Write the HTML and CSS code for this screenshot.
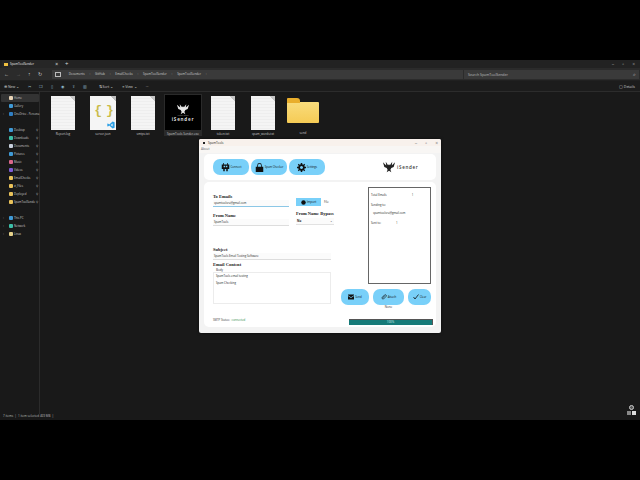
FILE: index.html
```html
<!DOCTYPE html>
<html lang="en">
<head>
    <meta charset="UTF-8">
    <meta name="viewport" content="width=device-width, initial-scale=1.0">
    <title>SpamToolSender</title>
    <link rel="stylesheet" href="styles.css">
</head>
<body>
    <div class="explorer">
        <div class="tabs">
            <div class="tab"><span class="mini-folder"></span>SpamToolSender<span class="tab-x">×</span></div>
            <span class="tab-plus">+</span>
            <div class="win-controls"><span>–</span><span>▫</span><span>×</span></div>
        </div>
        <div class="addressbar">
            <div class="nav-icons"><span>←</span><span class="dim">→</span><span>↑</span><span>↻</span></div>
            <div class="path">
                <span class="pc"></span>
                <span>Documents</span><i>›</i><span>GitHub</span><i>›</i><span>EmailChecks</span><i>›</i><span>SpamToolSender</span><i>›</i><span>SpamToolSender</span><i>›</i>
            </div>
            <div class="search">Search SpamToolSender<span>⌕</span></div>
        </div>
        <div class="commands">
            <span>⊕ New ⌄</span>
            <span class="cmd-icons">✂ ❐ ▯ ◉ ⇪ ▥</span>
            <span>⇅ Sort ⌄</span>
            <span>≡ View ⌄</span>
            <span>···</span>
            <span class="details">▢ Details</span>
        </div>
        <div class="body">
            <aside class="sidebar">
                <div class="side-item active"><b class="dot home"></b>Home</div>
                <div class="side-item"><b class="dot blue"></b>Gallery</div>
                <div class="side-item"><u>›</u><b class="dot cloud"></b>OneDrive - Persona</div>
                <div class="side-gap"></div>
                <div class="side-item"><b class="dot blue"></b>Desktop<em>⚲</em></div>
                <div class="side-item"><b class="dot teal"></b>Downloads<em>⚲</em></div>
                <div class="side-item"><b class="dot grey"></b>Documents<em>⚲</em></div>
                <div class="side-item"><b class="dot blue"></b>Pictures<em>⚲</em></div>
                <div class="side-item"><b class="dot pink"></b>Music<em>⚲</em></div>
                <div class="side-item"><b class="dot purple"></b>Videos<em>⚲</em></div>
                <div class="side-item"><b class="dot yellow"></b>EmailChecks<em>⚲</em></div>
                <div class="side-item"><b class="dot yellow"></b>zi_Files<em>⚲</em></div>
                <div class="side-item"><b class="dot yellow"></b>Deployed<em>⚲</em></div>
                <div class="side-item"><b class="dot yellow"></b>SpamToolSende<em>⚲</em></div>
                <div class="side-gap"></div>
                <div class="side-item"><u>›</u><b class="dot blue"></b>This PC</div>
                <div class="side-item"><u>›</u><b class="dot teal"></b>Network</div>
                <div class="side-item"><u>›</u><b class="dot linux"></b>Linux</div>
            </aside>
            <main class="files">
                <div class="file"><div class="doc"></div><span>Report.log</span></div>
                <div class="file"><div class="doc json"><span class="braces">{ }</span><svg class="vscode" viewBox="0 0 10 10"><path d="M7 0.5 L9.5 1.6 V8.4 L7 9.5 L2.8 5.7 L1.2 7 L0.4 6.5 V3.5 L1.2 3 L2.8 4.3 Z M7 3 L4.6 5 L7 7 Z" fill="#2a9fe6" fill-rule="evenodd"/></svg></div><span>server.json</span></div>
                <div class="file"><div class="doc"></div><span>smtps.txt</span></div>
                <div class="file selected">
                    <div class="exe">
                        <svg class="eagle" viewBox="0 0 30 24"><path d="M2 3 L9 9 L8 2 L13 8 L15 6 L17 8 L22 2 L21 9 L28 3 L25 12 L20 14 L18 18 L20 23 L15 20 L10 23 L12 18 L10 14 L5 12 Z" fill="#e6e6e6"/></svg>
                        <span class="exe-tag">Spam Tools</span>
                        <span class="exe-logo">iSender</span>
                    </div>
                    <span>SpamTools Sender.exe</span>
                </div>
                <div class="file"><div class="doc"></div><span>token.txt</span></div>
                <div class="file"><div class="doc"></div><span>spam_words.txt</span></div>
                <div class="file"><div class="folder"></div><span>send</span></div>
            </main>
        </div>
        <div class="statusbar">7 items &nbsp;|&nbsp; 1 item selected 469 MB &nbsp;|</div>
    </div>

    <div class="webcam">
        <span class="cam-dot"></span>
        <div class="cam-keys"><i></i><i class="on"></i></div>
    </div>

    <div class="app">
        <div class="app-title">
            <span class="app-name"><b></b>SpamTools</span>
            <div class="app-controls"><span>–</span><span>▫</span><span>×</span></div>
        </div>
        <div class="app-menu">About</div>
        <div class="app-body">
            <header class="app-header">
                <div class="top-buttons">
                    <button class="pill top-pill"><svg viewBox="0 0 12 12"><path d="M3 0h1v2h4V0h1v2h2v6H9v3H7V8H5v3H3V8H1V2h2z M3.500 3.500v2h2v-2z M6.500 3.500v2h2v-2z" fill-rule="evenodd"/></svg>Connect</button>
                    <button class="pill top-pill"><svg viewBox="0 0 12 12"><path d="M1 5h10v7H1z M3 5V3a3 3 0 0 1 6 0v2H8V3a2 2 0 0 0-4 0v2z"/></svg>Spam Checker</button>
                    <button class="pill top-pill"><svg viewBox="0 0 12 12"><path d="M5 0h2v1.700l1.500.6L9.700 1.100 10.900 2.300 9.700 3.500l.6 1.500H12v2h-1.700l-.6 1.500 1.200 1.200-1.200 1.200-1.200-1.200-1.500.6V12H5v-1.700l-1.500-.6-1.200 1.200-1.200-1.200 1.200-1.200L1.700 7H0V5h1.700l.6-1.500L1.100 2.300 2.300 1.100 3.500 2.300 5 1.700z M6 4a2 2 0 1 0 .01 0z" fill-rule="evenodd"/></svg>Settings</button>
                </div>
                <div class="brand">
                    <svg viewBox="0 0 30 24"><path d="M2 2 L9 9 L8 1 L13 8 L15 6 L17 8 L22 1 L21 9 L28 2 L25 12 L20 14 L18 18 L20 23 L15 20 L10 23 L12 18 L10 14 L5 12 Z" fill="#222"/></svg>
                    <span>iSender</span>
                </div>
            </header>
            <section class="card">
                <div class="form">
                    <div class="row-top">
                        <div class="col-wide">
                            <label class="label">To Emails</label>
                            <div class="input focus">spamtoolsru@gmail.com</div>
                            <label class="label gap-label">From Name</label>
                            <div class="input">SpamTools</div>
                        </div>
                        <div class="col-side">
                            <div class="import-row">
                                <button class="import"><svg viewBox="0 0 10 10"><circle cx="5" cy="5" r="4.500"/></svg>Import</button>
                                <span class="small">File</span>
                            </div>
                            <label class="label bypass">From Name Bypass</label>
                            <div class="select">No<span>⌄</span></div>
                        </div>
                    </div>
                    <label class="label subject">Subject</label>
                    <div class="input long">SpamTools Email Testing Software</div>
                    <label class="label content">Email Content</label>
                    <div class="small body-label">Body</div>
                    <div class="textbox">
                        <p>SpamTools email testing</p>
                        <p>Spam Checking</p>
                    </div>
                    <div class="smtp">SMTP Status: <span>connected</span></div>
                </div>
                <div class="side">
                    <div class="log">
                        <div class="log-row"><span>Total Emails</span><span class="total">1</span></div>
                        <div class="log-row">Sending to:</div>
                        <div class="log-mail">spamtoolsru@gmail.com</div>
                        <div class="log-row sent"><span>Sent to:</span><span>1</span></div>
                    </div>
                    <div class="actions">
                        <button class="pill act send"><svg viewBox="0 0 12 10"><path d="M0 0h12v10H0z M0 1.500L6 5.500 12 1.500V3L6 7 0 3z" fill-rule="evenodd"/></svg>Send</button>
                        <div class="attach-wrap">
                            <button class="pill act attach"><svg viewBox="0 0 12 12"><path d="M1.500 7.500L7 2a2 2 0 0 1 3 3L5 10a1.200 1.200 0 0 1-2-2l4.500-4.500" fill="none" stroke="#111" stroke-width="1.300"/></svg>Attach</button>
                            <span class="small none">None</span>
                        </div>
                        <button class="pill act clear"><svg viewBox="0 0 12 12"><path d="M1 6l3 4 7-9" fill="none" stroke="#111" stroke-width="1.600"/></svg>Clear</button>
                    </div>
                    <div class="progress">100%</div>
                </div>
            </section>
        </div>
    </div>
</body>
</html>
```

FILE: styles.css
```css
body, html {
    margin: 0;
    padding: 0;
    width: 640px;
    height: 480px;
    overflow: hidden;
    background: #000;
    font-family: "Open Sans", "Liberation Sans", sans-serif;
}
.explorer {
    position: absolute;
    left: 0;
    top: 60px;
    width: 640px;
    height: 360px;
    display: flex;
    flex-direction: column;
    background: #191919;
    color: #ddd;
    font-size: 3px;
}
.tabs {
    height: 8px;
    background: #222222;
    display: flex;
    align-items: center;
    padding-left: 2px;
}
.tab {
    width: 58px;
    height: 8px;
    box-sizing: border-box;
    background: #262626;
    display: flex;
    align-items: center;
    gap: 2px;
    padding-left: 2px;
    color: #eee;
}
.mini-folder {
    width: 4px;
    height: 3px;
    background: #f0c040;
}
.tab-x {
    margin-left: auto;
    margin-right: 2px;
    font-size: 5px;
}
.tab-plus {
    margin-left: 5px;
    font-size: 6px;
}
.win-controls {
    margin-left: auto;
    display: flex;
    gap: 8px;
    padding-right: 5px;
    font-size: 5px;
    color: #999;
}
.addressbar {
    height: 13px;
    background: #2b2b2b;
    display: flex;
    align-items: center;
    border-bottom: 1px solid #202020;
    box-sizing: border-box;
}
.nav-icons {
    display: flex;
    gap: 7px;
    width: 52px;
    box-sizing: border-box;
    padding-left: 4px;
    font-size: 5px;
    color: #ccc;
}
.nav-icons .dim {
    color: #666;
}
.path {
    width: 411px;
    height: 9px;
    background: #3a3a3a;
    display: flex;
    align-items: center;
    gap: 4.700px;
    padding-left: 3px;
    box-sizing: border-box;
    color: #ccc;
}
.path i {
    font-style: normal;
    color: #999;
}
.pc {
    width: 4px;
    height: 3px;
    border: 1px solid #bbb;
    margin-right: 3px;
}
.search {
    width: 175px;
    height: 9px;
    margin-left: 1px;
    background: #3a3a3a;
    display: flex;
    align-items: center;
    justify-content: space-between;
    padding: 0 3px 0 4px;
    box-sizing: border-box;
    color: #bbb;
    font-size: 3.500px;
}
.search span {
    font-size: 5px;
}
.commands {
    height: 10px;
    background: #1c1c1c;
    border-bottom: 1px solid #2c2c2c;
    display: flex;
    align-items: center;
    gap: 9px;
    padding: 0 5px 0 4px;
    color: #ccc;
    font-size: 3.500px;
}
.cmd-icons {
    word-spacing: 7px;
    margin-right: 3px;
    color: #8fb7c9;
}
.details {
    margin-left: auto;
}
.body {
    flex: 1;
    display: flex;
    min-height: 0;
}
.sidebar {
    width: 40px;
    flex: none;
    border-right: 1px solid #2b2b2b;
    padding-top: 2px;
    box-sizing: border-box;
}
.side-item {
    height: 8px;
    display: flex;
    align-items: center;
    gap: 1px;
    padding-left: 9px;
    white-space: nowrap;
    position: relative;
    color: #ccc;
    font-size: 2.800px;
}
.side-item.active {
    background: #333;
    margin-left: 1px;
    padding-left: 8px;
    border-radius: 1px;
}
.side-item em {
    font-style: normal;
    position: absolute;
    right: 1px;
    color: #aaa;
}
.side-item u {
    position: absolute;
    left: 3px;
    text-decoration: none;
    color: #aaa;
}
.side-gap {
    height: 8px;
}
.dot {
    flex: none;
    width: 4px;
    height: 4px;
    background: #888;
    border-radius: 1px;
}
.dot.home { background: #e8d3b5; }
.dot.blue { background: #3f9ad6; }
.dot.cloud { background: #2f7fc4; }
.dot.teal { background: #3cbfa8; }
.dot.grey { background: #c7d0dc; }
.dot.pink { background: #d9668a; }
.dot.purple { background: #7d5cd6; }
.dot.yellow { background: #e9c25a; }
.dot.linux { background: #e6d28a; }
.files {
    flex: 1;
    display: flex;
    align-items: flex-start;
    padding: 2px 0 0 3px;
}
.file {
    width: 40px;
    height: 42px;
    display: flex;
    flex-direction: column;
    align-items: center;
    padding-top: 2px;
    box-sizing: border-box;
    color: #ccc;
    gap: 2px;
    text-align: center;
    white-space: nowrap;
    font-size: 3px;
}
.doc {
    width: 24px;
    height: 34px;
    background:
        linear-gradient(225deg, #c4c4c4 0 4px, transparent 4px),
        repeating-linear-gradient(#f4f4f4 0 2px, #eeeeee 2px 3px);
    position: relative;
}
.doc.json {
    width: 26px;
    height: 35px;
    background: linear-gradient(225deg, #bdbdbd 0 4px, #f5f5f5 4px);
}
.braces {
    position: absolute;
    left: 0;
    right: 0;
    top: 7px;
    text-align: center;
    font-family: "Liberation Mono", monospace;
    font-weight: bold;
    font-size: 13px;
    color: #c9bb4a;
    letter-spacing: -2px;
}
.vscode {
    position: absolute;
    right: 1px;
    bottom: 1px;
    width: 8px;
    height: 8px;
}
.file.selected {
    width: 38px;
    margin: 0 1px;
    padding-top: 1px;
    background: #2a2a2a;
}
.exe {
    width: 36px;
    height: 36px;
    background: #000;
    display: flex;
    flex-direction: column;
    align-items: center;
    justify-content: center;
}
.eagle {
    width: 14px;
    height: 12px;
}
.exe-tag {
    font-size: 2px;
    line-height: 2px;
    color: #888;
}
.exe-logo {
    font-size: 4.500px;
    font-weight: bold;
    letter-spacing: 0.800px;
    color: #ddd;
    line-height: 5px;
}
.folder {
    width: 32px;
    height: 21px;
    margin-top: 6px;
    margin-bottom: 6px;
    border-radius: 1px;
    background: linear-gradient(#f9dc7c, #f5cb55);
    position: relative;
}
.folder::before {
    content: "";
    position: absolute;
    left: 0;
    top: -4px;
    width: 13px;
    height: 5px;
    background: #e9ae2c;
    border-radius: 1px 3px 0 0;
}
.statusbar {
    height: 6px;
    line-height: 5px;
    padding-left: 3px;
    color: #bbb;
    white-space: pre;
    font-size: 3px;
}
.webcam {
    position: absolute;
    left: 626px;
    top: 405px;
    width: 11px;
    display: flex;
    flex-direction: column;
    align-items: center;
    gap: 1px;
}
.cam-dot {
    width: 5px;
    height: 5px;
    border-radius: 50%;
    border: 1px solid #ccc;
    box-sizing: border-box;
    background: #555;
}
.cam-keys {
    display: flex;
    gap: 1px;
}
.cam-keys i {
    width: 4px;
    height: 4px;
    background: #888;
}
.cam-keys i.on {
    background: #ddd;
}
.app {
    position: absolute;
    left: 199px;
    top: 139px;
    width: 242px;
    height: 194px;
    background: #f3f3f3;
    color: #222;
    display: flex;
    flex-direction: column;
    font-size: 3px;
    border-radius: 2px;
    box-shadow: 0 0 3px rgba(0, 0, 0, 0.6);
}
.app-title {
    height: 7px;
    background: #f8f1ec;
    display: flex;
    align-items: center;
    justify-content: space-between;
    padding: 0 3px 0 4px;
    border-radius: 2px 2px 0 0;
}
.app-name {
    display: flex;
    align-items: center;
    gap: 3px;
}
.app-name b {
    width: 2px;
    height: 2px;
    background: #222;
}
.app-controls {
    display: flex;
    gap: 8px;
    font-size: 5px;
    color: #777;
}
.app-menu {
    height: 7px;
    line-height: 7px;
    padding-left: 2px;
    color: #666;
    background: #f8f6f4;
}
.app-body {
    flex: 1;
    display: flex;
    flex-direction: column;
    gap: 2px;
    padding: 1px 5px 6px 5px;
    min-height: 0;
}
.app-header {
    height: 26px;
    background: #fff;
    border-radius: 5px;
    display: flex;
    align-items: center;
    padding-left: 9px;
    flex: none;
}
.top-buttons {
    display: flex;
    gap: 2px;
}
.pill {
    border: none;
    padding: 0;
    margin: 0;
    background: #79d0f9;
    border-radius: 7px;
    display: flex;
    align-items: center;
    justify-content: center;
    gap: 1px;
    font-family: inherit;
    font-size: 2.800px;
    color: #111;
}
.pill svg {
    fill: #111;
    flex: none;
}
.top-pill {
    width: 36px;
    height: 16px;
}
.top-pill svg {
    width: 9px;
    height: 9px;
}
.brand {
    margin-left: 57px;
    display: flex;
    align-items: center;
    gap: 1px;
}
.brand svg {
    width: 14px;
    height: 12px;
}
.brand span {
    font-weight: 600;
    font-size: 4.500px;
    letter-spacing: 0.700px;
    color: #333;
}
.card {
    flex: 1;
    background: #fff;
    border-radius: 5px;
    display: flex;
    min-height: 0;
    padding-left: 9px;
}
.form {
    width: 118px;
    display: flex;
    flex-direction: column;
    padding-top: 12px;
}
.label {
    display: block;
    font-family: "Liberation Serif", serif;
    font-weight: bold;
    font-size: 4.500px;
    line-height: 5px;
    color: #222;
}
.input {
    height: 7px;
    line-height: 7px;
    width: 76px;
    box-sizing: border-box;
    border-bottom: 1px solid #ddd;
    background: #fbfbfb;
    padding-left: 1px;
    margin-top: 1px;
    font-size: 2.800px;
}
.input.focus {
    border-bottom-color: #8cc7e6;
}
.input.long {
    width: 118px;
}
.gap-label {
    margin-top: 6px;
}
.row-top {
    display: flex;
    gap: 7px;
}
.col-wide {
    width: 76px;
}
.col-side {
    width: 40px;
    padding-top: 4px;
}
.import-row {
    display: flex;
    align-items: center;
    gap: 3px;
}
.import {
    width: 25px;
    height: 8px;
    border: none;
    padding: 0;
    background: #79d0f9;
    display: flex;
    align-items: center;
    justify-content: center;
    gap: 1px;
    font-family: inherit;
    font-size: 3px;
    color: #111;
}
.import svg {
    width: 5px;
    height: 5px;
    fill: #111;
}
.small {
    font-size: 3px;
    color: #333;
}
.bypass {
    margin-top: 5px;
    white-space: nowrap;
}
.select {
    height: 6px;
    line-height: 6px;
    margin-top: 2px;
    padding: 0 1px;
    display: flex;
    justify-content: space-between;
    border-bottom: 1px solid #e2e2e2;
    font-weight: bold;
    background: #fbfbfb;
}
.subject {
    margin-top: 21px;
}
.content {
    margin-top: 2px;
}
.body-label {
    padding-left: 3px;
    line-height: 3px;
    margin-top: 2px;
}
.textbox {
    height: 32px;
    box-sizing: border-box;
    border: 1px solid #ececec;
    padding: 1px 2px;
}
.textbox p {
    margin: 0 0 3px;
    line-height: 4px;
    font-size: 2.800px;
}
.smtp {
    margin-top: 14px;
    line-height: 4px;
    color: #444;
    font-size: 2.800px;
}
.smtp span {
    color: #2e8b45;
    margin-left: 1px;
}
.side {
    flex: 1;
    position: relative;
    display: flex;
    flex-direction: column;
    align-items: flex-end;
    padding: 5px 5px 0 0;
}
.log {
    width: 63px;
    height: 97px;
    box-sizing: border-box;
    border: 1px solid #666;
    background: #fff;
    padding: 5px 2px;
    flex: none;
}
.log-row {
    display: flex;
    line-height: 4px;
    font-size: 2.800px;
}
.log-row .total {
    margin-left: 25px;
}
.log-row:nth-child(2) {
    margin-top: 6px;
}
.log-mail {
    margin-top: 4px;
    padding-left: 2px;
    line-height: 4px;
    font-size: 2.800px;
}
.log-row.sent {
    margin-top: 6px;
    gap: 15px;
}
.actions {
    display: flex;
    gap: 4px;
    margin-top: 5px;
    align-items: flex-start;
}
.act {
    height: 16px;
}
.act svg {
    width: 6px;
    height: 6px;
}
.send { width: 28px; }
.attach { width: 31px; }
.clear { width: 23px; }
.attach-wrap {
    display: flex;
    flex-direction: column;
    align-items: center;
}
.none {
    line-height: 3px;
    margin-top: 1px;
}
.progress {
    position: absolute;
    right: 3px;
    top: 137px;
    width: 84px;
    height: 6px;
    box-sizing: border-box;
    background: #167a78;
    border-top: 1px solid #555;
    border-right: 1px solid #555;
    color: #d5efef;
    text-align: center;
    line-height: 5px;
    font-size: 3px;
}
```
